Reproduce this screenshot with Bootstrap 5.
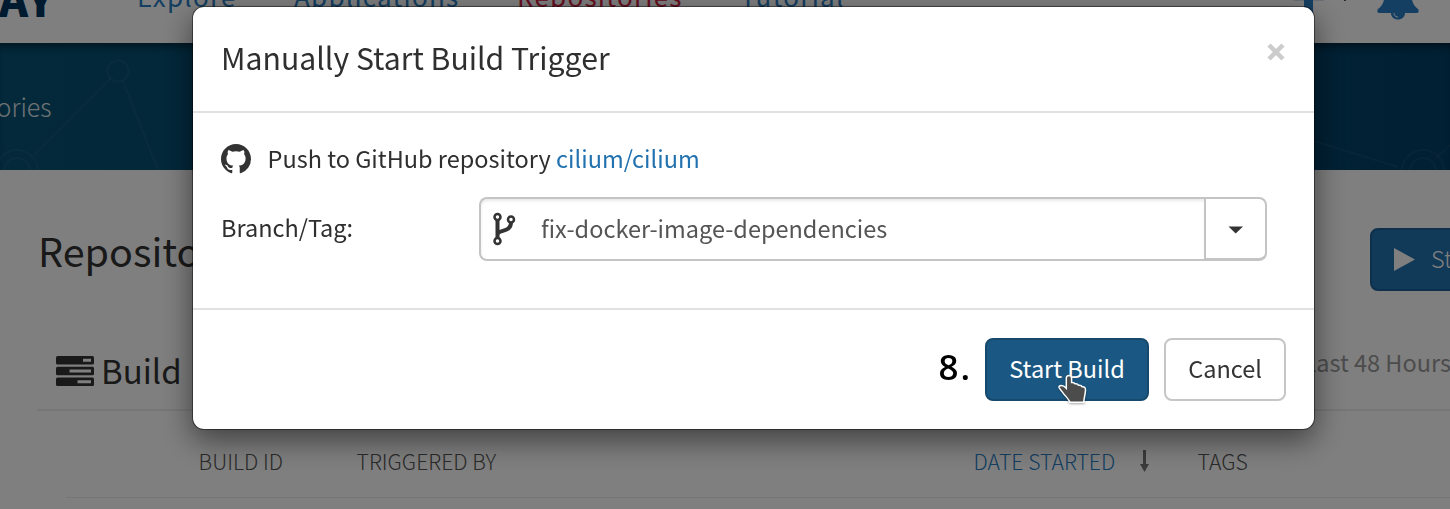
<!DOCTYPE html>
<html lang="en">
<head>
<meta charset="utf-8">
<meta name="viewport" content="width=device-width, initial-scale=1">
<title>Manually Start Build Trigger</title>
<link href="https://cdn.jsdelivr.net/npm/bootstrap@5.3.0/dist/css/bootstrap.min.css" rel="stylesheet">
<style>
body{font-family:"Noto Sans CJK SC","Noto Sans",sans-serif;font-size:23.5px;line-height:36px;color:#333;background:#fff;height:509px;overflow:hidden!important}
svg{display:block;flex:none}
.page-shell{height:509px;overflow:hidden}
.topbar{height:43px;overflow:hidden}
.topbar a{color:#2a7ec4;font-size:26px;line-height:36px;letter-spacing:1.25px;margin-top:-22px;text-decoration:none}
.topbar a.current{color:#d0203f}
.brand-mark{width:137px;font-size:44px;font-weight:900;line-height:60px;margin-top:-32px;color:#003560}
.brand-mark span{margin-left:-1px}
.main-nav{gap:57.4px}
.banner{height:127px;background:linear-gradient(90deg,#065276 0,#054a6e 60%,#024068 100%);box-shadow:inset 0 8px 8px -5px rgba(0,0,0,.5)}
.banner-art{left:0;top:0}
.crumb{font-weight:300;color:#dfe5e8;font-size:25px;margin:-1px 0 0 -88px}
.title-row{height:178px;padding-left:38px}
.page-title{font-size:39.5px;line-height:60px;font-weight:400;margin:-18px 0 0;color:#333}
.run-btn{background:#2272b0;border:2px solid #1a629a;border-radius:8px;width:200px;height:63px;color:#fff;font-size:23.5px;font-weight:300;margin-right:-120px;white-space:nowrap}
.section-row{margin-left:37px;padding:0 0 16px 19px;height:63px;border-bottom:2px solid #ededed}
.section-name{font-size:33px;line-height:46px;color:#333;margin:-2px 0 0 7px;word-spacing:8px}
.range-label{color:#999;margin:-18px -1px 0 0}
.cols{margin-left:66px;height:87px;padding-top:14px;border-bottom:1px solid #ededed;font-weight:300;font-size:21.2px;color:#555}
.cols .sorted{color:#2a7ec4}
.modal-dialog{width:1123px;max-width:none;margin:6px 0 0 192px}
.modal-content{border:1px solid rgba(0,0,0,.45);border-radius:12px;box-shadow:0 10px 30px rgba(0,0,0,.5);background-clip:padding-box;color:#2f2f2f}
.modal-header{height:106px;padding:0 28px;border-bottom:2px solid #e1e1e1;align-items:flex-start}
.modal-title{font-size:30.2px;line-height:46px;font-weight:400;margin-top:27px}
.dismiss{border:0;background:none;padding:0;margin:36px 1px 0 0}
.modal-body{height:195px;padding:28px 28px 0;flex:none}
.modal-body a{color:#2272b0;text-decoration:none}
.push-line{margin:-1px 0 1px 16.5px}
.branch-row{margin-top:20px}
.branch-row label{width:258px;margin-top:-5px}
.picker{width:788px;height:64px}
.picker .form-control{border:2px solid #c4c4c4;border-right:0;border-radius:8px 0 0 8px;box-shadow:inset 0 2px 3px rgba(0,0,0,.09);padding:0 0 0 11px;color:#555;font-size:23.5px}
.branch-name{margin:0 0 0 25px}
.picker .btn{width:63px;border:2px solid #c4c4c4;border-bottom-width:3px;border-radius:0 8px 8px 0!important;background:#fff}
.picker .btn svg{margin-top:2px}
.modal-footer{height:121px;padding:0 28px;border-top:2px solid #e1e1e1;flex-wrap:nowrap}
.modal-footer>*{margin:0}
.step{color:#000;font-family:"Open Sans",sans-serif;font-weight:600;font-size:35px;line-height:50px;letter-spacing:2px;margin:-6px 13px 0 0}
.modal-footer .btn{height:63px;padding:0 0 2px;border-width:2px;border-radius:8px;font-size:23.5px}
.go{width:164px;background:#1a5883!important;border-color:#17496c!important;margin-right:15px!important}
.no{width:122px;background:#fff;border-color:#c6c6c6;color:#333}
.pointer{left:69px;top:33px;filter:drop-shadow(0 1px 1px rgba(0,0,0,.35))}
</style>
</head>
<body>
<div class="page-shell">
  <header class="topbar d-flex align-items-start">
    <div class="brand-mark"><span class="d-inline-block">AY</span></div>
    <nav class="main-nav d-flex">
      <a href="#">Explore</a><a href="#">Applications</a><a href="#" class="current">Repositories</a><a href="#">Tutorial</a>
    </nav>
    <svg class="ms-auto" width="157" height="20" viewBox="0 0 157 20">
      <path d="M0 0h31v1H0z" fill="#d3dfee"/><path d="M11 0h9v14h-9z" fill="#2a7ec4"/><path d="M51 0h2v1h-2z" fill="#555"/>
      <path d="M91 0h28c1 4 3 7 6 9 1 1 1 4-1 4H86c-2 0-2-3-1-4 3-2 5-5 6-9zM98 13h14c0 4-3 6.500-7 6.500s-7-2.500-7-6.500z" fill="#2a7ec4"/><path d="M101 13c0 2 1 4 4 4" fill="none" stroke="#fff"/>
    </svg>
  </header>
  <section class="banner position-relative d-flex align-items-center">
    <svg class="banner-art position-absolute" width="1450" height="127" fill="none" stroke="#fff" stroke-opacity=".05" stroke-width="2">
      <circle cx="118" cy="28" r="10.500"/><path d="M110 36 34 112M123 38l35 89M1314 98l84 26M1437 114l13-12"/>
      <circle cx="17" cy="128" r="21"/><circle cx="17" cy="128" r="13"/><circle cx="1423" cy="128" r="21"/><circle cx="1423" cy="128" r="13"/>
    </svg>
    <span class="crumb">Repositories</span>
  </section>
  <main>
    <div class="title-row d-flex align-items-center justify-content-between">
      <h1 class="page-title">Repository Builds</h1>
      <button class="run-btn btn d-flex align-items-center p-0"><svg width="59" height="26"><path d="M22 2v23l21-11.500z" fill="#fff"/></svg>Start New Build</button>
    </div>
    <div class="section-row d-flex align-items-center">
      <svg width="38" height="30"><rect width="38" height="8.500" rx="1.500" fill="#333"/><rect y="10.700" width="38" height="8.500" rx="1.500" fill="#333"/><rect y="21.400" width="38" height="8.500" rx="1.500" fill="#333"/><path d="M27 2.700h8v3h-8zM13.500 13.500H35v3H13.500zM21.500 24.200H35v3H21.500z" fill="#fff"/></svg>
      <span class="section-name">Build History</span>
      <span class="range-label ms-auto">Last 48 Hours</span>
    </div>
    <div class="cols d-flex align-items-center">
      <span style="width:158px;margin-left:132.600px">BUILD ID</span><span style="width:617px">TRIGGERED BY</span><span class="sorted" style="width:165px">DATE STARTED</span>
      <svg width="59" height="22"><path d="M4 0h3v14h3L5.500 22 1 14h3z" fill="#777"/></svg><span>TAGS</span>
    </div>
  </main>
</div>

<div class="modal-backdrop show"></div>
<div class="modal d-block overflow-hidden" tabindex="-1">
  <div class="modal-dialog">
    <div class="modal-content">
      <div class="modal-header">
        <h4 class="modal-title">Manually Start Build Trigger</h4>
        <button class="dismiss" aria-label="Close"><svg width="18" height="18"><path d="m2 2 14 14m0-14-14 14" stroke="#ccc" stroke-width="4.500"/></svg></button>
      </div>
      <div class="modal-body">
        <div class="d-flex align-items-center">
          <svg width="30" height="30" viewBox="0 0 16 16" fill="#333"><path d="M8 0C3.580 0 0 3.580 0 8c0 3.540 2.290 6.530 5.470 7.590.4.070.55-.17.55-.38 0-.19-.01-.82-.01-1.490-2.010.37-2.530-.49-2.690-.94-.09-.23-.48-.94-.82-1.130-.28-.15-.68-.52-.01-.53.63-.01 1.080.58 1.230.82.72 1.210 1.870.87 2.330.66.07-.52.28-.87.51-1.070-1.780-.2-3.640-.89-3.640-3.950 0-.87.31-1.590.82-2.150-.08-.2-.36-1.020.08-2.120 0 0 .67-.21 2.200.82.64-.18 1.320-.27 2-.27s1.360.09 2 .27c1.530-1.040 2.200-.82 2.200-.82.44 1.100.16 1.920.08 2.120.51.56.82 1.270.82 2.150 0 3.070-1.870 3.750-3.650 3.950.29.25.54.73.54 1.480 0 1.070-.01 1.930-.01 2.200 0 .21.15.46.55.38A8.010 8.010 0 0 0 16 8c0-4.420-3.580-8-8-8z"/></svg>
          <span class="push-line">Push to GitHub repository <a href="#">cilium/cilium</a></span>
        </div>
        <div class="branch-row d-flex align-items-center">
          <label>Branch/Tag:</label>
          <div class="picker input-group flex-nowrap">
            <div class="form-control d-flex align-items-center">
              <svg width="24" height="34" fill="none" stroke="#333" stroke-width="2.500"><circle cx="5.500" cy="5" r="3"/><circle cx="5.500" cy="29" r="3"/><circle cx="19" cy="7.500" r="3"/><path d="M5.500 8v18M5.500 23c0-6 13-2 13.500-12" stroke-width="4"/></svg>
              <span class="branch-name">fix-docker-image-dependencies</span>
            </div>
            <button class="btn d-flex align-items-center justify-content-center p-0"><svg width="16" height="8"><path d="M.500.500h14.500L7.700 7.500z" fill="#333"/></svg></button>
          </div>
        </div>
      </div>
      <div class="modal-footer">
        <span class="step">8.</span>
        <button class="go btn btn-primary position-relative">Start Build
          <svg class="pointer position-absolute" width="32" height="34" viewBox="0 0 32 34"><path d="M13 2.500c2 0 2.600 1.200 2.600 3V9.500c2-.3 3 .5 3.400 1.300 2-.3 3 .5 3.600 1.500 2-.2 3.200.5 3.500 1.500 2.500-.2 3.500 1 3.400 3.500-.1 4-1.600 7-1.700 12H14c-1-3-5-6.500-7-9.500-1.300-2-3.300-3.600-4-5.300-.5-2.200 3.600-3.200 7.300.8V5.500c0-1.800.9-3 2.700-3z" fill="#4c4c4c" stroke="#fff" stroke-width="1.500"/></svg>
        </button>
        <button class="no btn">Cancel</button>
      </div>
    </div>
  </div>
</div>
<script src="https://cdn.jsdelivr.net/npm/bootstrap@5.3.0/dist/js/bootstrap.bundle.min.js"></script>
</body>
</html>
